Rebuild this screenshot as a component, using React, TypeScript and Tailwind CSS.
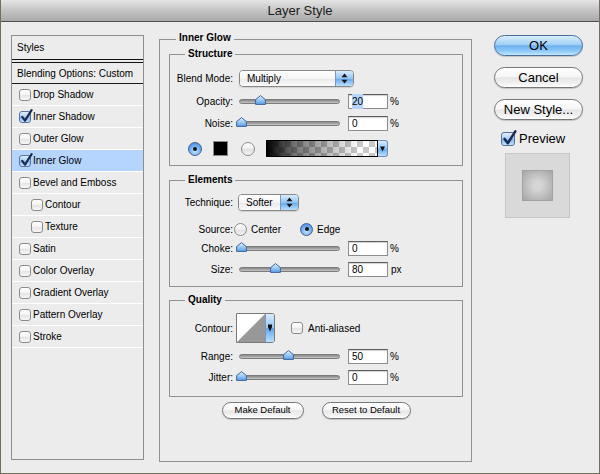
import React from "react";

const font = "font-['Liberation_Sans',Arial,sans-serif]";

type StyleRow = {
  label: string;
  checked?: boolean;
  active?: boolean;
  indent?: boolean;
};

const STYLE_ROWS: StyleRow[] = [
  { label: "Drop Shadow" },
  { label: "Inner Shadow", checked: true },
  { label: "Outer Glow" },
  { label: "Inner Glow", checked: true, active: true },
  { label: "Bevel and Emboss" },
  { label: "Contour", indent: true },
  { label: "Texture", indent: true },
  { label: "Satin" },
  { label: "Color Overlay" },
  { label: "Gradient Overlay" },
  { label: "Pattern Overlay" },
  { label: "Stroke" },
];

function CheckBox({ checked, big }: { checked?: boolean; big?: boolean }) {
  const size = big ? "h-[14px] w-[14px]" : "h-[12px] w-[12px]";
  const fill = checked
    ? "border-[#56739f] bg-[linear-gradient(to_bottom,#e2f0ff,#a9cdf3_50%,#7fb3ea_51%,#c4e3ff)]"
    : "border-[#8c8c8c] bg-[linear-gradient(to_bottom,#ffffff,#f2f2f2_50%,#e3e3e3_51%,#f7f7f7)]";
  return (
    <span className={`relative inline-block shrink-0 rounded-[3px] border ${size} ${fill}`}>
      {checked && (
        <svg
          className="absolute left-[0px] top-[-3px]"
          width={big ? 15 : 13}
          height={big ? 16 : 14}
          viewBox="0 0 13 14"
        >
          <path
            d="M2.2 7.8 L5 11.6 L11.6 1.2"
            fill="none"
            stroke="#1d2b52"
            strokeWidth="2.2"
            strokeLinecap="round"
            strokeLinejoin="round"
          />
        </svg>
      )}
    </span>
  );
}

function Radio({ on, big }: { on?: boolean; big?: boolean }) {
  const size = big ? "h-[14px] w-[14px]" : "h-[13px] w-[13px]";
  const fill = on
    ? "border-[#3f5f96] bg-[radial-gradient(circle_at_50%_70%,#bfe3ff,#6eaaf0_55%,#3d7fd8)]"
    : "border-[#8a8a8a] bg-[linear-gradient(to_bottom,#ffffff,#ececec_50%,#dedede_51%,#f6f6f6)]";
  return (
    <span className={`flex shrink-0 items-center justify-center rounded-full border ${size} ${fill}`}>
      {on && <span className="h-[4px] w-[4px] rounded-full bg-[#141414]" />}
    </span>
  );
}

function Label({ children }: { children: React.ReactNode }) {
  return <span className="w-[63px] shrink-0 text-right">{children}</span>;
}

function Slider({ at }: { at: number }) {
  return (
    <div className="relative ml-[3px] h-[15px] w-[106px] shrink-0">
      <div className="absolute left-[3px] top-[5px] h-[5px] w-[101px] rounded-full border border-[#7c7c7c] bg-[linear-gradient(to_bottom,#858585,#c6c6c6)]" />
      <svg
        className="absolute top-[1px]"
        style={{ left: at }}
        width="11"
        height="10"
        viewBox="0 0 11 10"
      >
        <defs>
          <linearGradient id="thumb" x1="0" y1="0" x2="0" y2="1">
            <stop offset="0" stopColor="#e4f2ff" />
            <stop offset="0.5" stopColor="#9cc9f4" />
            <stop offset="1" stopColor="#5c9fe6" />
          </linearGradient>
        </defs>
        <path
          d="M5.5 0.6 L10.4 4.6 V9.4 H0.6 V4.6 Z"
          fill="url(#thumb)"
          stroke="#3c64a0"
          strokeWidth="1"
          strokeLinejoin="round"
        />
      </svg>
    </div>
  );
}

function NumBox({ value, selected }: { value: string; selected?: boolean }) {
  return (
    <div className="ml-[6px] flex h-[15px] w-[40px] shrink-0 items-center border border-[#8d8d8d] border-t-[#5c5c5c] bg-white pl-[3px] shadow-[inset_0_1px_1px_rgba(0,0,0,0.18)]">
      <span className={selected ? "bg-[#b5d5ff]" : ""}>{value}</span>
    </div>
  );
}

function UpDown() {
  return (
    <svg width="7" height="11" viewBox="0 0 7 11">
      <path d="M0.5 4.3 L3.5 0.6 L6.5 4.3 Z M0.5 6.7 L3.5 10.4 L6.5 6.7 Z" fill="#161616" />
    </svg>
  );
}

function PopUp({ label, className }: { label: string; className: string }) {
  return (
    <div
      className={
        "flex h-[17px] shrink-0 overflow-hidden rounded-[4px] border border-[#878787] shadow-[0_1px_1px_rgba(0,0,0,0.12)] " +
        className
      }
    >
      <div className="flex flex-1 items-center bg-[linear-gradient(to_bottom,#ffffff,#f5f5f5_50%,#e8e8e8_51%,#fbfbfb)] pl-[7px]">
        {label}
      </div>
      <div className="flex w-[18px] items-center justify-center border-l border-[#7d96bf] bg-[linear-gradient(to_bottom,#d9edff,#92c4f3_50%,#62a6ec_51%,#b9e2ff)]">
        <UpDown />
      </div>
    </div>
  );
}

function GroupBox({
  title,
  className,
  children,
}: {
  title: string;
  className: string;
  children?: React.ReactNode;
}) {
  return (
    <div className={"relative border border-[#929292] " + className}>
      <span className="absolute left-[15px] top-[-7px] bg-[#ececec] px-[3px] text-[10px] font-bold leading-[12px]">
        {title}
      </span>
      {children}
    </div>
  );
}

function PillButton({
  children,
  primary,
  className = "",
}: {
  children: React.ReactNode;
  primary?: boolean;
  className?: string;
}) {
  const look = primary
    ? "border-[#4d6d9f] bg-[linear-gradient(to_bottom,#d7edff,#a3cff6_45%,#6eb1f0_52%,#8fcaf8_80%,#c2e9ff)]"
    : "border-[#777777] bg-[linear-gradient(to_bottom,#ffffff,#f6f6f6_45%,#e6e6e6_52%,#f1f1f1_80%,#ffffff)]";
  return (
    <div
      className={`flex items-center justify-center rounded-full border shadow-[0_1px_1px_rgba(0,0,0,0.18)] ${look} ${className}`}
    >
      {children}
    </div>
  );
}

export default function App() {
  return (
    <div
      className={`${font} flex h-[474px] w-[600px] flex-col overflow-hidden border-x border-b border-[#6f705d] bg-[#ececec] text-[10px] text-black`}
    >
      {/* title bar */}
      <div className="flex h-[22px] shrink-0 items-center justify-center rounded-t-[4px] border-b border-[#4f4f4f] bg-[linear-gradient(to_bottom,#e4e4e4,#c4c4c4_50%,#a9a9a9)] text-[13px] text-[#1c1c1c]">
        Layer Style
      </div>

      <div className="flex pl-[10px] pt-[13px]">
        {/* styles list */}
        <div className="flex h-[425px] w-[133px] shrink-0 flex-col border border-[#8e8e8e]">
          <div className="flex h-[23px] items-center pl-[5px]">Styles</div>
          <div className="h-px bg-[#111]" />
          <div className="h-[2px]" />
          <div className="h-px bg-[#111]" />
          <div className="flex h-[20px] items-center pl-[5px]">Blending Options: Custom</div>
          <div className="h-px bg-[#1c1c1c]" />
          {STYLE_ROWS.map((row) => (
            <div
              key={row.label}
              className={
                "flex h-[22px] items-center border-b border-white " +
                (row.active ? "bg-[#b5d5ff] " : "") +
                (row.indent ? "pl-[19px]" : "pl-[7px]")
              }
            >
              <CheckBox checked={row.checked} />
              <span className="ml-[2px]">{row.label}</span>
            </div>
          ))}
        </div>

        {/* settings */}
        <div className="relative ml-[15px] mt-[4px] h-[423px] w-[313px] shrink-0 border border-[#929292] pl-[9px] pr-[8px] pt-[14px]">
          <span className="absolute left-[16px] top-[-8px] bg-[#ececec] px-[3px] text-[10px] font-bold leading-[12px]">
            Inner Glow
          </span>

          <GroupBox title="Structure" className="h-[112px] pt-[15px]">
            <div className="flex h-[17px] items-center">
              <Label>Blend Mode:</Label>
              <PopUp label="Multiply" className="ml-[6px] w-[115px]" />
            </div>
            <div className="mt-[7px] flex h-[15px] items-center">
              <Label>Opacity:</Label>
              <Slider at={19} />
              <NumBox value="20" selected />
              <span className="ml-[2px]">%</span>
            </div>
            <div className="mt-[7px] flex h-[15px] items-center">
              <Label>Noise:</Label>
              <Slider at={0} />
              <NumBox value="0" />
              <span className="ml-[2px]">%</span>
            </div>
            <div className="mt-[9px] flex h-[17px] items-center pl-[18px]">
              <Radio on big />
              <div className="ml-[11px] h-[15px] w-[15px] border border-[#8a8a8a] bg-black" />
              <div className="ml-[13px]">
                <Radio big />
              </div>
              <div className="ml-[11px] flex h-[17px]">
                <div className="h-[17px] w-[112px] border border-black bg-[repeating-conic-gradient(#c9c9c9_0%_25%,#ffffff_0%_50%)] bg-[length:12px_12px]">
                  <div className="h-full w-full bg-[linear-gradient(to_right,#000000,rgba(0,0,0,0.55)_25%,rgba(0,0,0,0)_85%)]" />
                </div>
                <div className="flex w-[10px] items-center justify-center rounded-r-[3px] border border-l-0 border-[#6f8cbd] bg-[linear-gradient(to_bottom,#d9edff,#92c4f3_50%,#62a6ec_51%,#b9e2ff)]">
                  <svg width="5" height="6" viewBox="0 0 5 6">
                    <path d="M0 0.5 H5 L2.5 5.5 Z" fill="#111" />
                  </svg>
                </div>
              </div>
            </div>
          </GroupBox>

          <GroupBox title="Elements" className="mt-[14px] h-[107px] pt-[13px]">
            <div className="flex h-[17px] items-center">
              <Label>Technique:</Label>
              <PopUp label="Softer" className="ml-[5px] w-[61px]" />
            </div>
            <div className="mt-[11px] flex h-[14px] items-center">
              <Label>Source:</Label>
              <div className="ml-[1px] flex w-[66px] items-center">
                <Radio />
                <span className="ml-[4px]">Center</span>
              </div>
              <Radio on />
              <span className="ml-[4px]">Edge</span>
            </div>
            <div className="mt-[5px] flex h-[15px] items-center">
              <Label>Choke:</Label>
              <Slider at={0} />
              <NumBox value="0" />
              <span className="ml-[2px]">%</span>
            </div>
            <div className="mt-[6px] flex h-[15px] items-center">
              <Label>Size:</Label>
              <Slider at={34} />
              <NumBox value="80" />
              <span className="ml-[3px]">px</span>
            </div>
          </GroupBox>

          <GroupBox title="Quality" className="mt-[13px] h-[97px] pt-[12px]">
            <div className="flex h-[30px] items-center">
              <Label>Contour:</Label>
              <div className="ml-[3px] flex h-[30px] w-[39px] shrink-0 overflow-hidden rounded-r-[3px] border border-[#7a7a7a]">
                <svg width="28" height="28" viewBox="0 0 28 28" className="bg-white">
                  <path d="M0 28 L28 0 V28 Z" fill="#989898" />
                </svg>
                <div className="flex flex-1 items-center justify-center border-l border-[#7d96bf] bg-[linear-gradient(to_bottom,#d9edff,#92c4f3_50%,#62a6ec_51%,#b9e2ff)]">
                  <svg width="4" height="8" viewBox="0 0 4 8">
                    <path d="M0 0.5 H4 V3 L2 7.5 L0 3 Z" fill="#111" />
                  </svg>
                </div>
              </div>
              <div className="ml-[16px] flex items-center">
                <CheckBox />
              </div>
              <span className="ml-[5px]">Anti-aliased</span>
            </div>
            <div className="mt-[6px] flex h-[15px] items-center">
              <Label>Range:</Label>
              <Slider at={47} />
              <NumBox value="50" />
              <span className="ml-[2px]">%</span>
            </div>
            <div className="mt-[6px] flex h-[15px] items-center">
              <Label>Jitter:</Label>
              <Slider at={0} />
              <NumBox value="0" />
              <span className="ml-[2px]">%</span>
            </div>
          </GroupBox>

          <div className="mt-[5px] flex justify-center gap-[18px] text-[9.5px]">
            <PillButton className="h-[17px] w-[82px]">Make Default</PillButton>
            <PillButton className="h-[17px] w-[89px]">Reset to Default</PillButton>
          </div>
        </div>

        {/* actions */}
        <div className="ml-[22px] flex w-[89px] shrink-0 flex-col text-[13px]">
          <PillButton primary className="h-[21px]">
            OK
          </PillButton>
          <PillButton className="mt-[11px] h-[21px]">Cancel</PillButton>
          <PillButton className="mt-[11px] h-[21px]">New Style...</PillButton>
          <div className="mt-[11px] flex h-[16px] items-center pl-[7px]">
            <CheckBox checked big />
            <span className="ml-[4px]">Preview</span>
          </div>
          <div className="ml-[11px] mt-[6px] flex h-[65px] w-[65px] items-center justify-center border border-[#c6c6c6] bg-[#d9d9d9]">
            <div className="h-[31px] w-[31px] border border-[#a2a2a2] bg-[radial-gradient(circle,#d5d5d5_20%,#bdbdbd_60%,#a6a6a6)]" />
          </div>
        </div>
      </div>
    </div>
  );
}
